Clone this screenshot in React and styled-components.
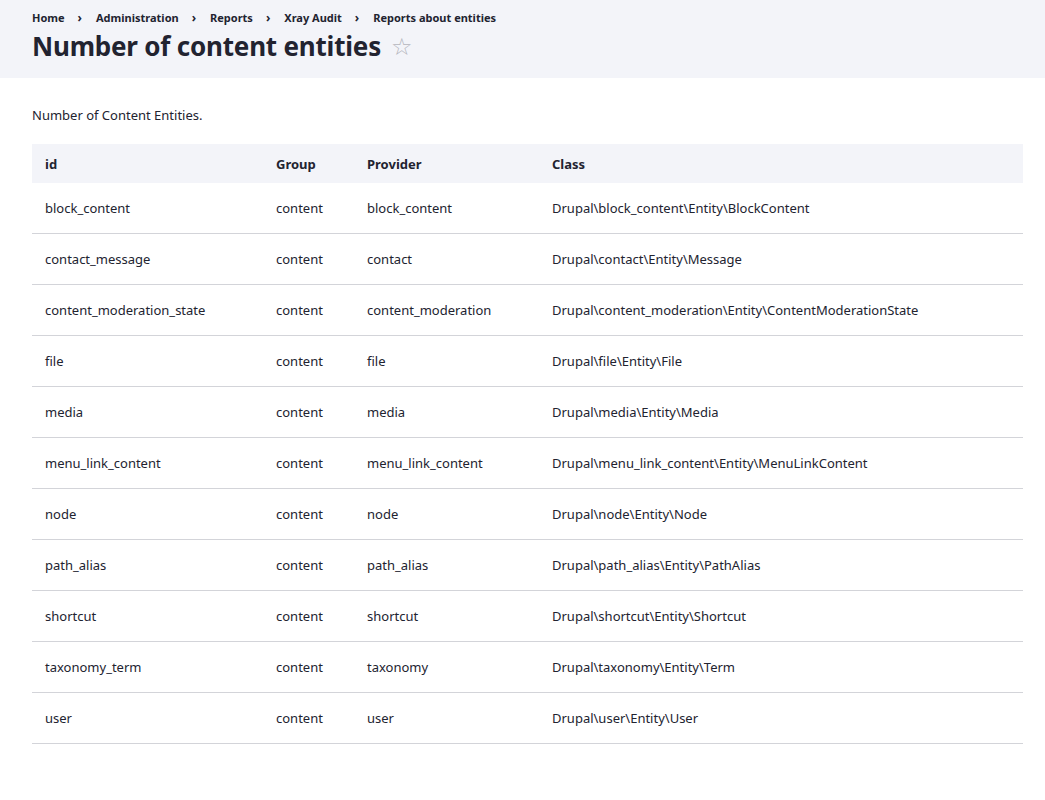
import styled, { createGlobalStyle } from 'styled-components'

const Global = createGlobalStyle`
  body { margin: 0; font-family: "Noto Sans", "DejaVu Sans", sans-serif; color: #222330; background: #fff; }
`

const Header = styled.header`
  background: #f3f4f9;
  padding: 10px 32px 20px;
  height: 78px;
  box-sizing: border-box;
`

const Crumbs = styled.ol`
  display: flex;
  list-style: none;
  margin: 0;
  padding: 0;
  font-size: 11px;
  font-weight: 700;
  line-height: 16px;
  li + li::before {
    content: '›';
    margin: 0 14px 0 13px;
    font-size: 12px;
  }
`

const Title = styled.h1`
  display: flex;
  align-items: center;
  gap: 10px;
  margin: 2px 0 0;
  font-size: 26px;
  line-height: 36px;
  font-weight: 700;
  letter-spacing: -0.2px;
`

const Star = styled.span`
  color: #b5b6bd;
  font-size: 24px;
  font-weight: 400;
`

const Main = styled.main`
  padding: 27px 22px 40px 32px;
`

const Intro = styled.p`
  margin: 0 0 19px;
  font-size: 13px;
  line-height: 20px;
`

const Table = styled.table`
  width: 100%;
  border-collapse: collapse;
  font-size: 13px;
  th {
    background: #f3f4f9;
    text-align: left;
    font-weight: 700;
    height: 39px;
    padding: 0 13px;
  }
  td {
    height: 50px;
    padding: 0 13px;
    border-bottom: 1px solid #d3d4d9;
  }
`

const rows = [
  ['block_content', 'block_content', 'Drupal\\block_content\\Entity\\BlockContent'],
  ['contact_message', 'contact', 'Drupal\\contact\\Entity\\Message'],
  ['content_moderation_state', 'content_moderation', 'Drupal\\content_moderation\\Entity\\ContentModerationState'],
  ['file', 'file', 'Drupal\\file\\Entity\\File'],
  ['media', 'media', 'Drupal\\media\\Entity\\Media'],
  ['menu_link_content', 'menu_link_content', 'Drupal\\menu_link_content\\Entity\\MenuLinkContent'],
  ['node', 'node', 'Drupal\\node\\Entity\\Node'],
  ['path_alias', 'path_alias', 'Drupal\\path_alias\\Entity\\PathAlias'],
  ['shortcut', 'shortcut', 'Drupal\\shortcut\\Entity\\Shortcut'],
  ['taxonomy_term', 'taxonomy', 'Drupal\\taxonomy\\Entity\\Term'],
  ['user', 'user', 'Drupal\\user\\Entity\\User'],
]

export default function App() {
  return (
    <>
      <Global />
      <Header>
        <Crumbs>
          {['Home', 'Administration', 'Reports', 'Xray Audit', 'Reports about entities'].map(c => <li key={c}>{c}</li>)}
        </Crumbs>
        <Title>Number of content entities <Star>☆</Star></Title>
      </Header>
      <Main>
        <Intro>Number of Content Entities.</Intro>
        <Table>
          <colgroup>
            <col style={{ width: 231 }} />
            <col style={{ width: 91 }} />
            <col style={{ width: 185 }} />
            <col />
          </colgroup>
          <thead>
            <tr><th>id</th><th>Group</th><th>Provider</th><th>Class</th></tr>
          </thead>
          <tbody>
            {rows.map(([id, p, c]) => (
              <tr key={id}><td>{id}</td><td>content</td><td>{p}</td><td>{c}</td></tr>
            ))}
          </tbody>
        </Table>
      </Main>
    </>
  )
}
